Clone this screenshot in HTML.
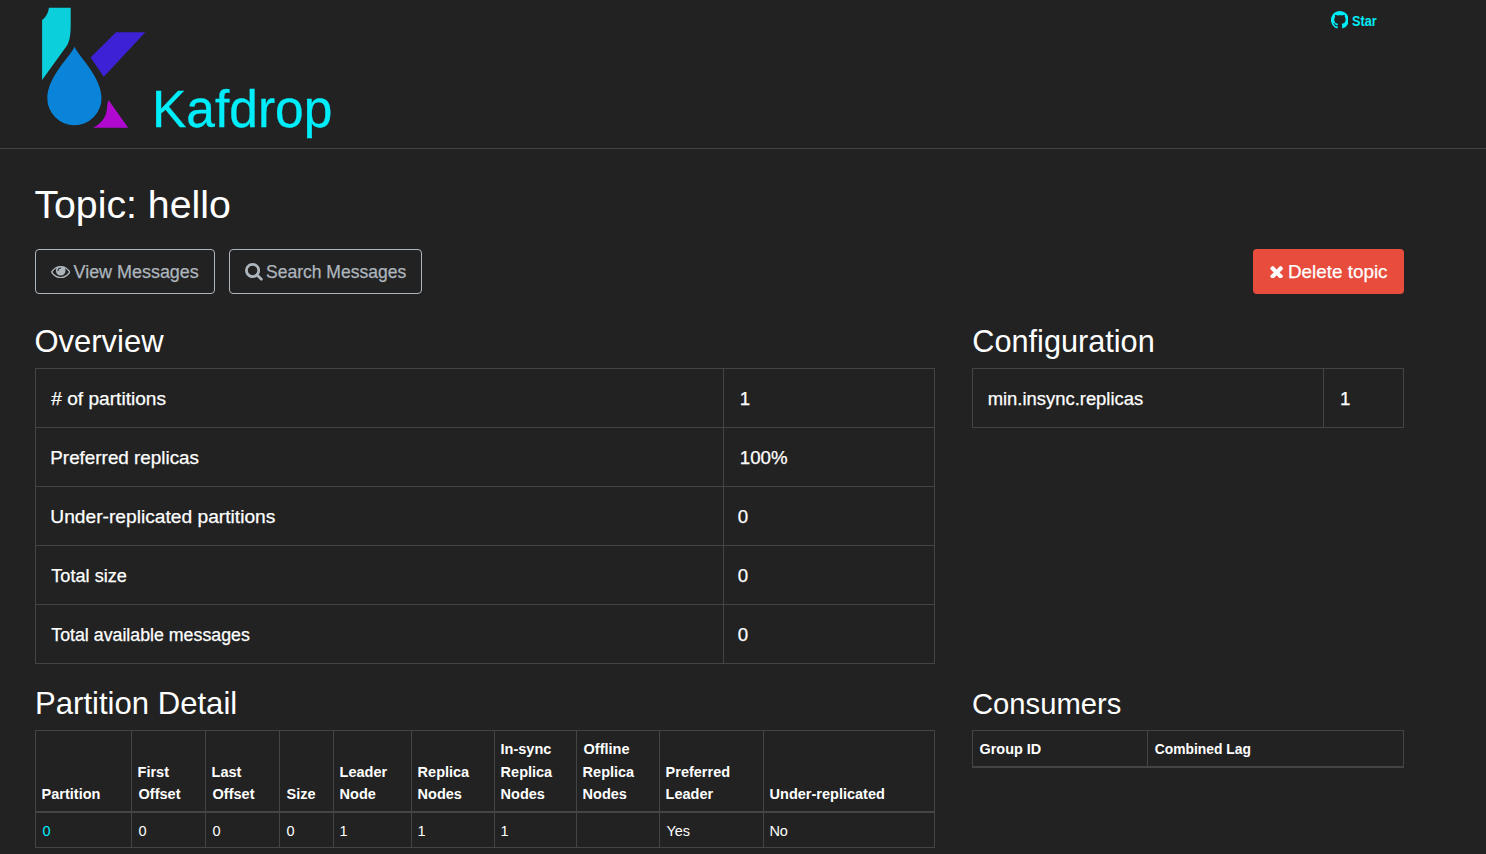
<!DOCTYPE html><html><head><meta charset="utf-8"><style>
html,body{margin:0;padding:0;background:#222;}
body{width:1486px;height:854px;overflow:hidden;position:relative;font-family:"Liberation Sans",sans-serif;}
.t{position:absolute;white-space:nowrap;}
.b{position:absolute;box-sizing:border-box;}
.h{position:absolute;background:#444;}
</style></head><body>

<div class="h" style="left:0px;top:148px;width:1486px;height:1px;background:#444"></div>
<svg style="position:absolute;left:0;top:0" width="160" height="140" viewBox="0 0 160 140">
<path d="M49 7.8 L70.7 7.8 L70.7 24 C70.7 34 70 40 67 45.5 L42.1 80.1 L42.1 20 Q47.8 15.9 49 7.8 Z" fill="#0bd0dc"/>
<path d="M116 32.2 L145.3 32.2 L103.8 76.8 L90.5 57.6 Z" fill="#3c22d4"/>
<path d="M108.5 100 L128.2 127.7 L93.2 127.7 C100 124.5 106 118 106.8 110 C107.2 105 107.8 102 108.5 100 Z" fill="#b00ad0"/>
<path d="M74.5 46.4 C76.5 54 101.5 76 101.5 98.2 A27.1 27.1 0 0 1 47.3 98.2 C47.3 76 72.5 54 74.5 46.4 Z" fill="#0a84d8"/>
</svg>
<svg style="position:absolute;left:1330.7px;top:10.8px" width="17.8" height="17.8" viewBox="0 0 16 16"><path fill="#00eefa" d="M8 0C3.58 0 0 3.58 0 8c0 3.54 2.29 6.53 5.47 7.59.4.07.55-.17.55-.38 0-.19-.01-.82-.01-1.49-2.01.37-2.53-.49-2.69-.94-.09-.23-.48-.94-.82-1.13-.28-.15-.68-.52-.01-.53.63-.01 1.08.58 1.23.82.72 1.21 1.87.87 2.33.66.07-.52.28-.87.51-1.07-1.78-.2-3.640-.89-3.64-3.95 0-.87.31-1.59.82-2.15-.08-.2-.36-1.02.08-2.12 0 0 .67-.21 2.2.82.64-.18 1.32-.27 2-.27.68 0 1.36.09 2 .27 1.53-1.04 2.2-.82 2.2-.82.44 1.1.16 1.92.08 2.12.51.56.82 1.27.82 2.15 0 3.07-1.87 3.75-3.65 3.95.29.25.54.73.54 1.48 0 1.07-.01 1.93-.01 2.2 0 .21.15.46.55.38A8.013 8.013 0 0016 8c0-4.42-3.58-8-8-8z"/></svg>
<div class="b" style="left:35px;top:249px;width:180px;height:45px;border:1px solid #adb5bd;border-radius:4px;"></div>
<div class="b" style="left:229px;top:249px;width:193px;height:45px;border:1px solid #adb5bd;border-radius:4px;"></div>
<div class="b" style="left:1253px;top:249px;width:151px;height:45px;background:#e74c3c;border-radius:4px;"></div>
<svg style="position:absolute;left:50.8px;top:265.9px" width="19.4" height="12.2" viewBox="0 0 1792 1130"><path fill="#adb5bd" d="M1664 565q-152-236-381-353 61 104 61 225 0 185-131.5 316.5T896 885t-316.5-131.5T448 437q0-121 61-225-229 117-381 353 133 205 333.5 326.5T896 1013t434.5-121.5T1664 565zM944 181q0-20-14-34t-34-14q-125 0-214.5 89.5T592 437q0 20 14 34t34 14 34-14 14-34q0-86 61-147t147-61q20 0 34-14t14-34zm848 384q0 34-20 69-140 230-376.5 368.5T896 1141t-499.5-139T20 634q-20-35-20-69t20-69q140-229 376.5-368T896-11t499.5 139T1772 496q20 35 20 69z"/></svg>
<svg style="position:absolute;left:245.2px;top:262.9px" width="17.9" height="17.7" viewBox="0 0 1664 1664"><path fill="#adb5bd" d="M1152 704q0-185-131.5-316.5T704 256 387.5 387.5 256 704t131.5 316.5T704 1152t316.5-131.5T1152 704zm512 832q0 52-38 90t-90 38q-54 0-90-38l-343-342q-179 124-399 124-143 0-273.5-55.5t-225-150-150-225T0 704t55.5-273.5 150-225 225-150T704 0t273.5 55.5 225 150 150 225T1408 704q0 220-124 399l343 343q37 37 37 90z"/></svg>
<svg style="position:absolute;left:1269.7px;top:265.5px" width="13.3" height="12.8" viewBox="0 0 1188 1188"><path fill="#fff" d="M1188 956q0 40-28 68l-136 136q-28 28-68 28t-68-28L594 866l-294 294q-28 28-68 28t-68-28L28 1024Q0 996 0 956t28-68l294-294L28 300Q0 272 0 232t28-68l136-136q28-28 68-28t68 28l294 294 294-294q28-28 68-28t68 28l136 136q28 28 28 68t-28 68L866 594l294 294q28 28 28 68z"/></svg>
<div class="b" style="left:35px;top:368px;width:900px;height:296px;border:1px solid #444;"></div>
<div class="h" style="left:35px;top:427px;width:900px;height:1px;background:#444"></div>
<div class="h" style="left:35px;top:486px;width:900px;height:1px;background:#444"></div>
<div class="h" style="left:35px;top:545px;width:900px;height:1px;background:#444"></div>
<div class="h" style="left:35px;top:604px;width:900px;height:1px;background:#444"></div>
<div class="h" style="left:723px;top:368px;width:1px;height:296px;background:#444"></div>
<div class="b" style="left:972px;top:368px;width:432px;height:60px;border:1px solid #444;"></div>
<div class="h" style="left:1323px;top:368px;width:1px;height:60px;background:#444"></div>
<div class="b" style="left:35px;top:730px;width:900px;height:118px;border:1px solid #444;"></div>
<div class="h" style="left:35px;top:811px;width:900px;height:2px;background:#444"></div>
<div class="h" style="left:131px;top:730px;width:1px;height:118px;background:#444"></div>
<div class="h" style="left:205px;top:730px;width:1px;height:118px;background:#444"></div>
<div class="h" style="left:279px;top:730px;width:1px;height:118px;background:#444"></div>
<div class="h" style="left:333px;top:730px;width:1px;height:118px;background:#444"></div>
<div class="h" style="left:411px;top:730px;width:1px;height:118px;background:#444"></div>
<div class="h" style="left:494px;top:730px;width:1px;height:118px;background:#444"></div>
<div class="h" style="left:576px;top:730px;width:1px;height:118px;background:#444"></div>
<div class="h" style="left:659px;top:730px;width:1px;height:118px;background:#444"></div>
<div class="h" style="left:763px;top:730px;width:1px;height:118px;background:#444"></div>
<div class="b" style="left:972px;top:730px;width:432px;height:38px;border:1px solid #444;border-bottom:2px solid #444;"></div>
<div class="h" style="left:1147px;top:730px;width:1px;height:37px;background:#444"></div>
<div class="t" style="left:152.00px;top:84.00px;font-size:51.47px;line-height:51.47px;color:#00eefa;-webkit-text-stroke:0.35px #00eefa;">Kafdrop</div>
<div class="t" style="left:1352.00px;top:14.00px;font-size:14.00px;line-height:14.00px;color:#00eefa;font-weight:bold;transform:scaleX(0.9074);transform-origin:0 0;">Star</div>
<div class="t" style="left:34.40px;top:185.00px;font-size:39.26px;line-height:39.26px;color:#ffffff;">Topic: hello</div>
<div class="t" style="left:73.50px;top:264.00px;font-size:17.94px;line-height:17.94px;color:#adb5bd;-webkit-text-stroke:0.25px #adb5bd;">View Messages</div>
<div class="t" style="left:266.00px;top:264.00px;font-size:17.52px;line-height:17.52px;color:#adb5bd;-webkit-text-stroke:0.25px #adb5bd;">Search Messages</div>
<div class="t" style="left:1288.00px;top:263.00px;font-size:18.85px;line-height:18.85px;color:#ffffff;-webkit-text-stroke:0.25px #ffffff;">Delete topic</div>
<div class="t" style="left:34.50px;top:327.00px;font-size:30.97px;line-height:30.97px;color:#ffffff;">Overview</div>
<div class="t" style="left:972.30px;top:327.00px;font-size:30.68px;line-height:30.68px;color:#ffffff;">Configuration</div>
<div class="t" style="left:35.00px;top:688.00px;font-size:31.10px;line-height:31.10px;color:#ffffff;">Partition Detail</div>
<div class="t" style="left:972.00px;top:690.00px;font-size:29.21px;line-height:29.21px;color:#ffffff;">Consumers</div>
<div class="t" style="left:51.30px;top:389.00px;font-size:19.11px;line-height:19.11px;color:#ffffff;-webkit-text-stroke:0.25px #ffffff;"># of partitions</div>
<div class="t" style="left:739.80px;top:390.00px;font-size:18.70px;line-height:18.70px;color:#ffffff;-webkit-text-stroke:0.25px #ffffff;">1</div>
<div class="t" style="left:50.30px;top:449.00px;font-size:18.85px;line-height:18.85px;color:#ffffff;-webkit-text-stroke:0.25px #ffffff;">Preferred replicas</div>
<div class="t" style="left:739.80px;top:449.00px;font-size:18.70px;line-height:18.70px;color:#ffffff;-webkit-text-stroke:0.25px #ffffff;">100%</div>
<div class="t" style="left:50.30px;top:507.00px;font-size:19.21px;line-height:19.21px;color:#ffffff;-webkit-text-stroke:0.25px #ffffff;">Under-replicated partitions</div>
<div class="t" style="left:737.80px;top:508.00px;font-size:18.70px;line-height:18.70px;color:#ffffff;-webkit-text-stroke:0.25px #ffffff;">0</div>
<div class="t" style="left:51.30px;top:567.00px;font-size:18.15px;line-height:18.15px;color:#ffffff;-webkit-text-stroke:0.25px #ffffff;">Total size</div>
<div class="t" style="left:737.80px;top:567.00px;font-size:18.70px;line-height:18.70px;color:#ffffff;-webkit-text-stroke:0.25px #ffffff;">0</div>
<div class="t" style="left:51.30px;top:627.00px;font-size:17.78px;line-height:17.78px;color:#ffffff;-webkit-text-stroke:0.25px #ffffff;">Total available messages</div>
<div class="t" style="left:737.80px;top:626.00px;font-size:18.70px;line-height:18.70px;color:#ffffff;-webkit-text-stroke:0.25px #ffffff;">0</div>
<div class="t" style="left:987.70px;top:390.00px;font-size:18.41px;line-height:18.41px;color:#ffffff;-webkit-text-stroke:0.25px #ffffff;">min.insync.replicas</div>
<div class="t" style="left:1340.00px;top:390.00px;font-size:18.70px;line-height:18.70px;color:#ffffff;-webkit-text-stroke:0.25px #ffffff;">1</div>
<div class="t" style="left:41.60px;top:787.00px;font-size:14.50px;line-height:14.50px;color:#ffffff;font-weight:bold;">Partition</div>
<div class="t" style="left:42.40px;top:823.50px;font-size:14.50px;line-height:14.50px;color:#00eefa;">0</div>
<div class="t" style="left:137.60px;top:764.50px;font-size:14.50px;line-height:14.50px;color:#ffffff;font-weight:bold;">First</div>
<div class="t" style="left:138.60px;top:787.00px;font-size:14.50px;line-height:14.50px;color:#ffffff;font-weight:bold;">Offset</div>
<div class="t" style="left:138.40px;top:823.50px;font-size:14.50px;line-height:14.50px;color:#ffffff;">0</div>
<div class="t" style="left:211.60px;top:764.50px;font-size:14.50px;line-height:14.50px;color:#ffffff;font-weight:bold;">Last</div>
<div class="t" style="left:212.60px;top:787.00px;font-size:14.50px;line-height:14.50px;color:#ffffff;font-weight:bold;">Offset</div>
<div class="t" style="left:212.40px;top:823.50px;font-size:14.50px;line-height:14.50px;color:#ffffff;">0</div>
<div class="t" style="left:286.60px;top:787.00px;font-size:14.50px;line-height:14.50px;color:#ffffff;font-weight:bold;">Size</div>
<div class="t" style="left:286.40px;top:823.50px;font-size:14.50px;line-height:14.50px;color:#ffffff;">0</div>
<div class="t" style="left:339.60px;top:764.50px;font-size:14.50px;line-height:14.50px;color:#ffffff;font-weight:bold;">Leader</div>
<div class="t" style="left:339.60px;top:787.00px;font-size:14.50px;line-height:14.50px;color:#ffffff;font-weight:bold;">Node</div>
<div class="t" style="left:339.40px;top:823.50px;font-size:14.50px;line-height:14.50px;color:#ffffff;">1</div>
<div class="t" style="left:417.60px;top:764.50px;font-size:14.50px;line-height:14.50px;color:#ffffff;font-weight:bold;">Replica</div>
<div class="t" style="left:417.60px;top:787.00px;font-size:14.50px;line-height:14.50px;color:#ffffff;font-weight:bold;">Nodes</div>
<div class="t" style="left:417.40px;top:823.50px;font-size:14.50px;line-height:14.50px;color:#ffffff;">1</div>
<div class="t" style="left:500.60px;top:742.00px;font-size:14.50px;line-height:14.50px;color:#ffffff;font-weight:bold;">In-sync</div>
<div class="t" style="left:500.60px;top:764.50px;font-size:14.50px;line-height:14.50px;color:#ffffff;font-weight:bold;">Replica</div>
<div class="t" style="left:500.60px;top:787.00px;font-size:14.50px;line-height:14.50px;color:#ffffff;font-weight:bold;">Nodes</div>
<div class="t" style="left:500.40px;top:823.50px;font-size:14.50px;line-height:14.50px;color:#ffffff;">1</div>
<div class="t" style="left:583.60px;top:742.00px;font-size:14.50px;line-height:14.50px;color:#ffffff;font-weight:bold;">Offline</div>
<div class="t" style="left:582.60px;top:764.50px;font-size:14.50px;line-height:14.50px;color:#ffffff;font-weight:bold;">Replica</div>
<div class="t" style="left:582.60px;top:787.00px;font-size:14.50px;line-height:14.50px;color:#ffffff;font-weight:bold;">Nodes</div>
<div class="t" style="left:665.60px;top:764.50px;font-size:14.50px;line-height:14.50px;color:#ffffff;font-weight:bold;">Preferred</div>
<div class="t" style="left:665.60px;top:787.00px;font-size:14.50px;line-height:14.50px;color:#ffffff;font-weight:bold;">Leader</div>
<div class="t" style="left:666.40px;top:823.50px;font-size:14.50px;line-height:14.50px;color:#ffffff;">Yes</div>
<div class="t" style="left:769.60px;top:787.00px;font-size:14.50px;line-height:14.50px;color:#ffffff;font-weight:bold;">Under-replicated</div>
<div class="t" style="left:769.40px;top:823.50px;font-size:14.50px;line-height:14.50px;color:#ffffff;">No</div>
<div class="t" style="left:979.50px;top:742.00px;font-size:14.43px;line-height:14.43px;color:#ffffff;font-weight:bold;">Group ID</div>
<div class="t" style="left:1154.80px;top:743.00px;font-size:13.83px;line-height:13.83px;color:#ffffff;font-weight:bold;">Combined Lag</div>
</body></html>
